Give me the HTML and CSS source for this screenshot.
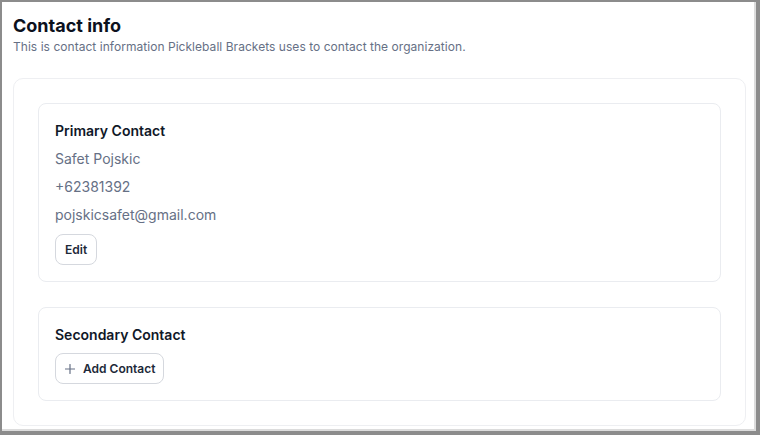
FILE: index.html
```html
<!DOCTYPE html>
<html lang="en">
<head>
<meta charset="utf-8">
<title>Contact info</title>
<link rel="stylesheet" href="styles.css">
</head>
<body>
<div class="frame">
  <div class="page">
    <header class="page-header">
      <h1 class="page-title">Contact info</h1>
      <p class="page-subtitle">This is contact information Pickleball Brackets uses to contact the organization.</p>
    </header>
    <section class="panel">
      <div class="contact-card">
        <h2 class="card-title">Primary Contact</h2>
        <div class="card-line">Safet Pojskic</div>
        <div class="card-line">+62381392</div>
        <div class="card-line">pojskicsafet@gmail.com</div>
        <button class="btn btn-edit" type="button">Edit</button>
      </div>
      <div class="contact-card">
        <h2 class="card-title">Secondary Contact</h2>
        <button class="btn btn-add" type="button">
          <svg class="btn-icon" width="10" height="10" viewBox="0 0 10 10" aria-hidden="true"><path d="M5 0.5v9M0.5 5h9" stroke="#667085" stroke-width="1.2" stroke-linecap="round" fill="none"/></svg>
          <span>Add Contact</span>
        </button>
      </div>
    </section>
  </div>
</div>
</body>
</html>
```
FILE: styles.css
```css
* { box-sizing: border-box; }
html, body { margin: 0; padding: 0; background: #ffffff; }
body { font-family: Inter, "Noto Sans", sans-serif; color: #101828; }

.frame {
  width: 760px;
  height: 435px;
  overflow: hidden;
  border-style: solid;
  border-color: #8c8c8c;
  border-width: 2px 4px 4px 2px;
  box-shadow: inset -2px -2px 0 #dcdcdc;
  background: #ffffff;
}

.page {
  padding: 11px 10px 0 11px;
}

.page-header { margin-bottom: 22px; }

.page-title {
  margin: 0;
  font-size: 18px;
  line-height: 25px;
  font-weight: 700;
  color: #0c111d;
}

.page-subtitle {
  margin: 0;
  font-size: 12px;
  line-height: 18px;
  letter-spacing: 0.04px;
  color: #667085;
}

.panel {
  border: 1px solid #eeeff2;
  border-radius: 10px;
  padding: 24px;
  display: flex;
  flex-direction: column;
  gap: 25px;
}

.contact-card {
  border: 1px solid #eaecf0;
  border-radius: 8px;
  padding: 17px 16px 16px;
  display: flex;
  flex-direction: column;
  align-items: flex-start;
  gap: 8px;
}

.card-title {
  margin: 0;
  font-size: 14px;
  line-height: 20px;
  font-weight: 600;
  color: #101828;
}

.card-line {
  font-size: 14px;
  line-height: 20px;
  color: #667085;
}

.btn {
  display: inline-flex;
  align-items: center;
  gap: 8px;
  height: 31px;
  padding: 0 9px;
  border: 1px solid #d5d8de;
  border-radius: 8px;
  background: #ffffff;
  font-family: Inter, "Noto Sans", sans-serif;
  font-size: 12px;
  font-weight: 600;
  color: #1d2939;
  cursor: pointer;
}

.btn-edit { margin-top: 1px; padding: 0 9px; }

.btn-add { padding: 0 8px 0 9px; }

.btn-icon { display: block; }
```
